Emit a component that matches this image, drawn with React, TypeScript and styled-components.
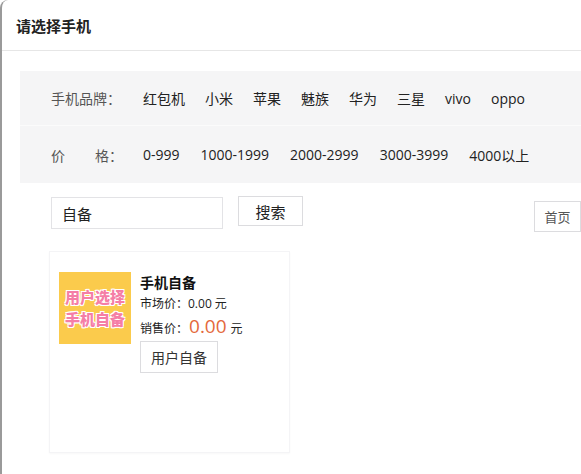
import styled, { createGlobalStyle } from "styled-components";

const FONT = `"Open Sans", "Noto Sans CJK SC", sans-serif`;

const GlobalStyle = createGlobalStyle`
	html, body {
		margin: 0;
		padding: 0;
		background: #ffffff;
		overflow: hidden;
	}
	body {
		font-family: ${FONT};
		color: #333;
	}
	* {
		box-sizing: border-box;
	}
`;

const Dialog = styled.div`
	width: 581px;
	height: 474px;
	border-left: 2px solid #9a9a9a;
	border-top-left-radius: 8px;
	background: #fff;
	display: flex;
	flex-direction: column;
`;

const Header = styled.div`
	height: 51px;
	display: flex;
	align-items: center;
	padding-left: 14px;
	border-bottom: 1px solid #e6e6e6;
	font-size: 15px;
	font-weight: bold;
	color: #222;
`;

const Body = styled.div`
	padding: 20px 0 0 18px;
	display: flex;
	flex-direction: column;
`;

const FilterPanel = styled.div`
	background: #f5f5f6;
	margin-right: -20px;
	display: flex;
	flex-direction: column;
`;

const FilterRow = styled.div<{ $height: number }>`
	height: ${(p) => p.$height}px;
	display: flex;
	align-items: center;
	padding-left: 31px;
	font-size: 14px;
	& + & {
		border-top: 1px solid #fbfbfb;
	}
`;

const FilterLabel = styled.div`
	width: 92px;
	color: #555;
	display: flex;
	justify-content: space-between;
	padding-right: 20px;
`;

const FilterOption = styled.span<{ $gap: number }>`
	color: #222;
	margin-right: ${(p) => p.$gap}px;
	cursor: pointer;
`;

const SearchBar = styled.div`
	display: flex;
	align-items: flex-start;
	padding: 14px 0 0 31px;
`;

const SearchInput = styled.div`
	width: 172px;
	height: 32px;
	border: 1px solid #e3e3e6;
	display: flex;
	align-items: center;
	padding-left: 10px;
	font-size: 15px;
	color: #222;
`;

const Button = styled.button<{ $w: number; $h: number }>`
	width: ${(p) => p.$w}px;
	height: ${(p) => p.$h}px;
	background: #fff;
	border: 1px solid #dcdcdf;
	font-family: ${FONT};
	font-size: 14px;
	color: #333;
	padding: 0;
	cursor: pointer;
`;

const SearchButton = styled(Button)`
	margin-left: 15px;
	margin-top: -1px;
	font-size: 15px;
	color: #222;
`;

const HomeButton = styled(Button)`
	margin-left: auto;
	margin-top: 4px;
	margin-right: 0;
	color: #555;
	font-size: 13px;
`;

const Card = styled.div`
	width: 241px;
	height: 202px;
	margin: 19px 0 0 29px;
	border: 1px solid #f4f4f6;
	box-shadow: 0 1px 2px rgba(0, 0, 0, 0.03);
	padding: 20px 9px;
	display: flex;
	align-items: flex-start;
	gap: 9px;
`;

const Thumb = styled.div`
	width: 72px;
	height: 72px;
	background: #fbcb4c;
	display: flex;
	flex-direction: column;
	align-items: center;
	justify-content: center;
	gap: 2px;
	font-size: 15px;
	font-weight: 900;
	line-height: 20px;
	color: #f57ea6;
	text-shadow: -1px -1px 0 #fff, 1px -1px 0 #fff, -1px 1px 0 #fff, 1px 1px 0 #fff, 0 1px 0 #fff, 0 -1px 0 #fff;
`;

const Info = styled.div`
	display: flex;
	flex-direction: column;
	padding-top: 1px;
`;

const Title = styled.div`
	font-size: 14px;
	font-weight: bold;
	color: #111;
	line-height: 20px;
`;

const PriceLine = styled.div`
	font-size: 12px;
	color: #222;
	line-height: 22px;
	display: flex;
	align-items: baseline;
`;

const SalePrice = styled.span`
	font-size: 19px;
	color: #e4693d;
	margin: 0 4px 0 1px;
`;

const ChooseButton = styled(Button)`
	margin-top: 1px;
	color: #333;
`;

const brands = ["红包机", "小米", "苹果", "魅族", "华为", "三星", "vivo", "oppo"];
const prices = ["0-999", "1000-1999", "2000-2999", "3000-3999", "4000以上"];

export default function App() {
	return (
		<>
			<GlobalStyle />
			<Dialog>
				<Header>请选择手机</Header>
				<Body>
					<FilterPanel>
						<FilterRow $height={54}>
							<FilterLabel>
								<span>手机品牌：</span>
							</FilterLabel>
							{brands.map((b) => (
								<FilterOption key={b} $gap={20}>
									{b}
								</FilterOption>
							))}
						</FilterRow>
						<FilterRow $height={58}>
							<FilterLabel>
								<span>价</span>
								<span>格：</span>
							</FilterLabel>
							{prices.map((p) => (
								<FilterOption key={p} $gap={21}>
									{p}
								</FilterOption>
							))}
						</FilterRow>
					</FilterPanel>
					<SearchBar>
						<SearchInput>自备</SearchInput>
						<SearchButton $w={65} $h={30}>
							搜索
						</SearchButton>
						<HomeButton $w={47} $h={31}>
							首页
						</HomeButton>
					</SearchBar>
					<Card>
						<Thumb>
							<span>用户选择</span>
							<span>手机自备</span>
						</Thumb>
						<Info>
							<Title>手机自备</Title>
							<PriceLine>市场价：0.00 元</PriceLine>
							<PriceLine>
								销售价：<SalePrice>0.00</SalePrice>元
							</PriceLine>
							<ChooseButton $w={78} $h={32}>
								用户自备
							</ChooseButton>
						</Info>
					</Card>
				</Body>
			</Dialog>
		</>
	);
}
